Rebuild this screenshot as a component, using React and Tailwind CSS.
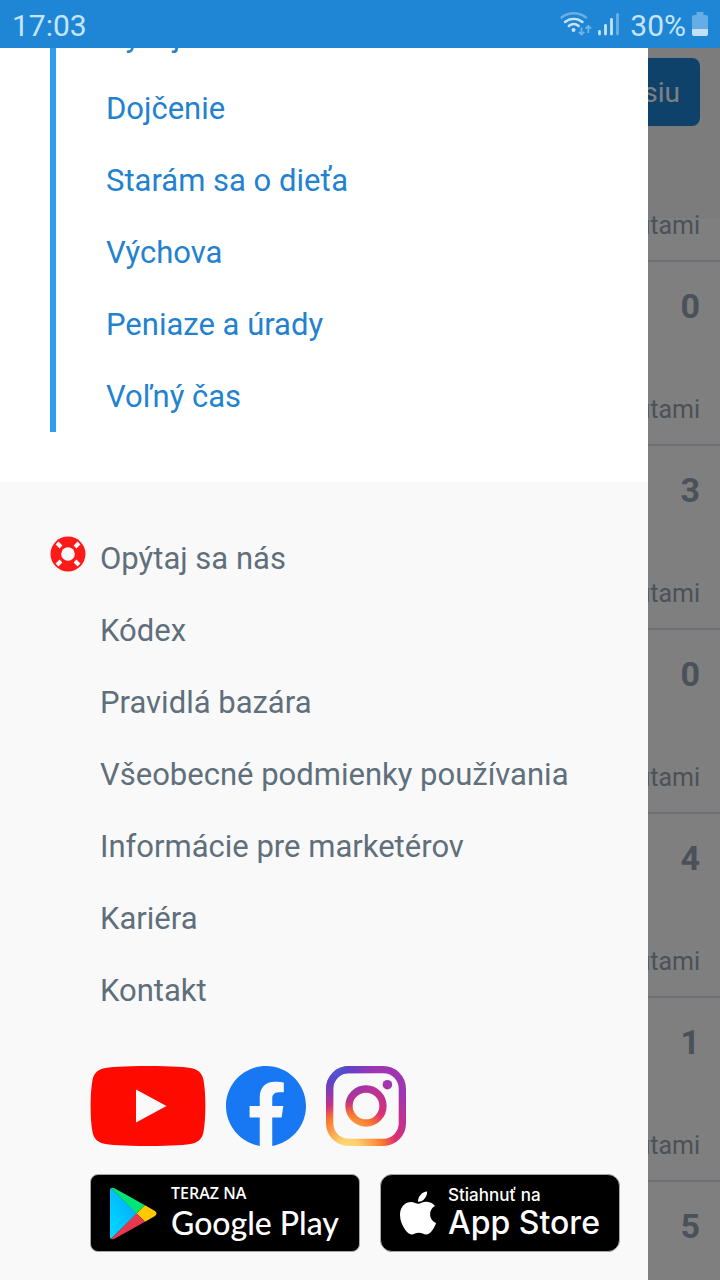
import React from "react";

const articleLinks = [
  "Vývoj",
  "Dojčenie",
  "Starám sa o dieťa",
  "Výchova",
  "Peniaze a úrady",
  "Voľný čas",
];

const footerLinks = [
  { label: "Opýtaj sa nás", icon: true },
  { label: "Kódex" },
  { label: "Pravidlá bazára" },
  { label: "Všeobecné podmienky používania" },
  { label: "Informácie pre marketérov" },
  { label: "Kariéra" },
  { label: "Kontakt" },
];

const threads = [0, 3, 0, 4, 1, 5];

function StatusBar() {
  return (
    <div className="flex h-12 shrink-0 items-center justify-between bg-[#1f85d5] px-3 text-[30px] leading-9 text-[#c4e5fd]">
      <span className="pt-1">17:03</span>
      <div className="flex items-center">
        <svg className="h-6 w-8" viewBox="0 0 32 24" fill="none">
          <g stroke="#c4e5fd" strokeWidth="2.4" strokeLinecap="round">
            <path d="M1.5 5.5C8.5-.2 19-.2 26 5.5" opacity=".45" />
            <path d="M5 10C10 5.8 17.5 5.8 22.5 10" />
            <path d="M8.8 14C12 11.4 15.5 11.4 18.7 14" />
          </g>
          <circle cx="13.5" cy="18" r="2" fill="#c4e5fd" />
          <path
            d="M21.5 15.5v7M18.7 19.8l2.8 2.8 2.8-2.8M28.3 21v-7M25.5 16.7l2.8-2.8 2.8 2.8"
            stroke="#c4e5fd"
            strokeWidth="1.8"
            opacity=".5"
          />
        </svg>
        <svg
          className="ml-1 h-6 w-6"
          viewBox="0 0 24 24"
          stroke="#c4e5fd"
          strokeWidth="2.8"
          strokeLinecap="round"
        >
          <path d="M3.5 22v-2.5M9.5 22v-8.5M15.5 22V7.5" />
          <path d="M21.5 22V2.5" opacity=".45" />
        </svg>
        <span className="ml-2.5 pt-1">30%</span>
        <svg className="ml-1.5 h-6 w-4" viewBox="0 0 16 24">
          <path
            d="M4.5 0h7v3H14a2 2 0 0 1 2 2v12H0V5a2 2 0 0 1 2-2h2.5z"
            fill="#64ade5"
          />
          <path d="M0 17h16v5a2 2 0 0 1-2 2H2a2 2 0 0 1-2-2z" fill="#c4e0f7" />
        </svg>
      </div>
    </div>
  );
}

function ForumPage() {
  return (
    <div className="flex h-full flex-col bg-white text-[#94a3b0]">
      <header className="flex h-[169px] shrink-0 items-start justify-end bg-[#f8f8f8] px-5 pt-[10px] shadow-xs">
        <button
          type="button"
          className="h-[68px] rounded-lg bg-[#1f85d5] px-5 pt-0.5 text-[28px] whitespace-nowrap text-white"
        >
          Pridaj diskusiu
        </button>
      </header>
      <div className="flex h-[45px] shrink-0 flex-col justify-end border-b-2 border-[#dfe3ea] px-5 pb-[22px] text-right text-[25px] leading-6">
        <span>minútami</span>
      </div>
      {threads.map((count, index) => (
        <div
          key={index}
          className="flex h-[184px] shrink-0 flex-col items-end justify-between border-b-2 border-[#dfe3ea] px-5 pt-6 pb-[22px]"
        >
          <span className="text-[34px] leading-10 font-bold">{count}</span>
          <span className="text-[25px] leading-6">minútami</span>
        </div>
      ))}
    </div>
  );
}

function LifeRing() {
  return (
    <svg className="h-9 w-9" viewBox="0 0 36 36">
      <circle cx="18" cy="18" r="17.5" fill="#ff1a1a" />
      <circle cx="18" cy="18" r="6.8" fill="#f9f9f9" />
      <path
        d="M7 7l4 4M29 7l-4 4M7 29l4-4M29 29l-4-4"
        stroke="#f9f9f9"
        strokeWidth="4"
      />
    </svg>
  );
}

function YoutubeLogo() {
  return (
    <svg className="h-20 w-29" viewBox="0 0 116 80">
      <path
        d="M58 0C82 0 97 1 103 2.5C109 4 112.5 8.5 113.5 14C116 27 116 53 113.5 66C112.5 71.5 109 76 103 77.5C97 79 82 80 58 80S19 79 13 77.5C7 76 3.5 71.5 2.5 66C0 53 0 27 2.5 14C3.5 8.5 7 4 13 2.5C19 1 34 0 58 0Z"
        fill="#ff0a00"
      />
      <path d="M46 23.5L76.5 40L46 56.5Z" fill="#f9f9f9" />
    </svg>
  );
}

function FacebookLogo() {
  return (
    <svg className="h-20 w-20" viewBox="8 8 496 496">
      <path
        d="M504 256C504 119 393 8 256 8S8 119 8 256c0 123.78 90.69 226.38 209.25 248V327.69h-63V256h63v-54.64c0-62.15 37-96.48 93.67-96.48 27.14 0 55.52 4.84 55.52 4.84v61h-31.28c-30.8 0-40.41 19.12-40.41 38.73V256h68.78l-11 71.69h-57.78V504C413.31 482.38 504 379.78 504 256z"
        fill="#1877f2"
      />
    </svg>
  );
}

function InstagramLogo() {
  return (
    <svg className="h-20 w-20" viewBox="0 0 80 80" fill="none">
      <defs>
        <radialGradient
          id="ig-warm"
          cx="22"
          cy="84"
          r="78"
          gradientUnits="userSpaceOnUse"
        >
          <stop offset="0" stopColor="#ffdd77" />
          <stop offset=".14" stopColor="#ffd070" />
          <stop offset=".45" stopColor="#fb7a2e" />
          <stop offset=".62" stopColor="#dc2f72" />
          <stop offset="1" stopColor="#a035b4" />
        </radialGradient>
        <radialGradient
          id="ig-cool"
          cx="8"
          cy="2"
          r="46"
          gradientUnits="userSpaceOnUse"
        >
          <stop offset="0" stopColor="#4a5fd8" />
          <stop offset=".3" stopColor="#5a45c8" />
          <stop offset="1" stopColor="#8a35c0" stopOpacity="0" />
        </radialGradient>
      </defs>
      {["url(#ig-warm)", "url(#ig-cool)"].map((paint) => (
        <g key={paint} stroke={paint} strokeWidth="7.3">
          <rect x="3.65" y="3.65" width="72.7" height="72.7" rx="19" />
          <circle cx="40" cy="40" r="17" />
          <circle cx="61.4" cy="18.7" r="4.8" fill={paint} stroke="none" />
        </g>
      ))}
    </svg>
  );
}

function PlayLogo() {
  return (
    <svg className="h-[53px] w-12" viewBox="0 0 48 53">
      <defs>
        <linearGradient id="play-blue" x1="1" y1="0" x2="0" y2="1">
          <stop offset="0" stopColor="#00a5ff" />
          <stop offset="1" stopColor="#00dcff" />
        </linearGradient>
      </defs>
      <path d="M2 1Q1 1.5 1 3V50Q1 51.5 2 52L28 26.5Z" fill="url(#play-blue)" />
      <path d="M2 1Q3.5 .2 5.5 1.3L36 18.2L27.5 26.5Z" fill="#00e676" />
      <path
        d="M36 18.2L46 24Q49 26.5 46 29L36 34.8L27.5 26.5Z"
        fill="#ffc800"
      />
      <path d="M36 34.8L5.5 51.7Q3.5 52.8 2 52L27.5 26.5Z" fill="#e8384f" />
    </svg>
  );
}

function AppleLogo() {
  return (
    <svg className="h-11 w-9" viewBox="4 32 376 448">
      <path
        d="M318.7 268.7c-.2-36.7 16.4-64.4 50-84.8-18.8-26.9-47.2-41.7-84.7-44.6-35.5-2.8-74.3 20.7-88.5 20.7-15 0-49.4-19.7-76.4-19.7C63.3 141.2 4 184.8 4 273.5q0 39.3 14.4 81.2c12.8 36.7 59 126.7 107.2 125.2 25.2-.6 43-17.9 75.8-17.9 31.8 0 48.3 17.9 76.4 17.9 48.6-.7 90.4-82.5 102.6-119.3-65.2-30.7-61.7-90-61.7-91.9zm-56.6-164.2c27.3-32.4 24.8-61.9 24-72.5-24.1 1.4-52 16.4-67.9 34.9-17.5 19.8-27.8 44.3-25.6 71.9 26.1 2 49.9-11.4 69.5-34.3z"
        fill="#fff"
      />
    </svg>
  );
}

function Drawer() {
  return (
    <aside className="absolute inset-y-0 left-0 flex w-9/10 flex-col justify-end overflow-hidden bg-white text-[31px] leading-10">
      {/* Articles */}
      <nav className="shrink-0 px-[50px] pb-[50px]">
        <ul className="border-l-6 border-[#2f9df0] pl-[50px] text-[#2282d0]">
          {articleLinks.map((label) => (
            <li key={label}>
              <a href="#" className="flex h-18 items-center pt-0.5">
                {label}
              </a>
            </li>
          ))}
        </ul>
      </nav>

      {/* Footer */}
      <footer className="shrink-0 bg-[#f9f9f9] pt-10 pb-7">
        <ul className="px-[50px] text-[#5f6f7b]">
          {footerLinks.map((link) => (
            <li key={link.label}>
              <a
                href="#"
                className="flex h-18 items-center pt-0.5 whitespace-nowrap"
              >
                <span className="w-[50px] pb-2.5">
                  {link.icon && <LifeRing />}
                </span>
                {link.label}
              </a>
            </li>
          ))}
        </ul>
        <div className="mt-10 flex gap-5 pl-[90px]">
          <a href="#" aria-label="YouTube">
            <YoutubeLogo />
          </a>
          <a href="#" aria-label="Facebook">
            <FacebookLogo />
          </a>
          <a href="#" aria-label="Instagram">
            <InstagramLogo />
          </a>
        </div>
        <div className="mt-7 flex gap-5 pl-[90px] whitespace-nowrap text-white">
          <a
            href="#"
            className="flex h-[78px] w-[270px] items-center gap-3.5 rounded-lg border border-[#a6a6a6] bg-black pl-[18px]"
          >
            <PlayLogo />
            <span className="flex flex-col pb-1">
              <span className="font-['Open_Sans',sans-serif] text-base leading-6 font-semibold">
                TERAZ NA
              </span>
              <span className="font-[Lato,sans-serif] text-[32px] leading-9 font-medium">
                Google Play
              </span>
            </span>
          </a>
          <a
            href="#"
            className="flex h-[78px] w-[240px] items-center gap-3 rounded-xl border border-[#a6a6a6] bg-black pl-[19px]"
          >
            <AppleLogo />
            <span className="flex flex-col pb-1 font-[Inter,sans-serif] font-medium">
              <span className="text-[17px] leading-6">Stiahnuť na</span>
              <span className="text-[32px] leading-8">App Store</span>
            </span>
          </a>
        </div>
      </footer>
    </aside>
  );
}

export default function App() {
  return (
    <div className="flex h-screen flex-col overflow-hidden font-[Roboto,sans-serif]">
      <StatusBar />
      <div className="relative min-h-0 flex-1 overflow-hidden">
        <ForumPage />
        <div className="absolute inset-0 bg-black/50"></div>
        <Drawer />
      </div>
    </div>
  );
}
